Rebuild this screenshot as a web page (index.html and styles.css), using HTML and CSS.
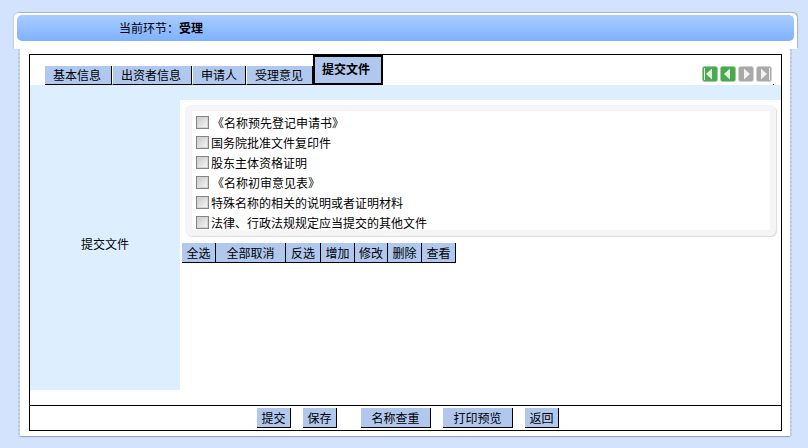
FILE: index.html
```html
<!DOCTYPE html>
<html lang="zh">
<head>
<meta charset="utf-8">
<title>提交文件</title>
<link rel="stylesheet" href="styles.css">
</head>
<body>
<header class="head">
  <div class="head-bar">
    <span class="head-label">当前环节：</span><strong class="head-value">受理</strong>
  </div>
</header>
<main class="sheet">
  <div class="frame">
    <nav class="tabbar">
      <div class="tabs">
        <a class="tab tab-a">基本信息</a>
        <a class="tab tab-b">出资者信息</a>
        <a class="tab tab-c">申请人</a>
        <a class="tab tab-d">受理意见</a>
        <a class="tab-active">提交文件</a>
      </div>
      <div class="pager">
        <svg class="pg" viewBox="0 0 16 16"><rect class="pg-green" x=".5" y=".5" width="15" height="15" rx="2"/><rect class="pg-mark" x="2" y="2" width="1" height="12"/><path class="pg-mark" d="M10 2.5v11L4 8z"/></svg>
        <svg class="pg" viewBox="0 0 16 16"><rect class="pg-green" x=".5" y=".5" width="15" height="15" rx="2"/><path class="pg-mark" d="M10 2.5v11L4 8z"/></svg>
        <svg class="pg" viewBox="0 0 16 16"><rect class="pg-grey" x=".5" y=".5" width="15" height="15" rx="2"/><path class="pg-mark" d="M6 2.5v11L12 8z"/></svg>
        <svg class="pg" viewBox="0 0 16 16"><rect class="pg-grey" x=".5" y=".5" width="15" height="15" rx="2"/><path class="pg-mark" d="M5 2.5v11L11 8z"/><rect class="pg-mark" x="13" y="2" width="1" height="12"/></svg>
      </div>
      <i class="dot"></i>
    </nav>
    <section class="content">
      <div class="side">提交文件</div>
      <div class="pane">
        <div class="group">
          <div class="group-inner">
            <label class="row"><span class="cb"></span><span class="row-gap">《名称预先登记申请书》</span></label>
            <label class="row"><span class="cb"></span>国务院批准文件复印件</label>
            <label class="row"><span class="cb"></span>股东主体资格证明</label>
            <label class="row"><span class="cb"></span><span class="row-gap">《名称初审意见表》</span></label>
            <label class="row"><span class="cb"></span>特殊名称的相关的说明或者证明材料</label>
            <label class="row"><span class="cb"></span>法律、行政法规规定应当提交的其他文件</label>
          </div>
        </div>
        <div class="actions">
          <button class="btn w34">全选</button>
          <button class="btn w70">全部取消</button>
          <button class="btn w35">反选</button>
          <button class="btn w34">增加</button>
          <button class="btn w33">修改</button>
          <button class="btn w34">删除</button>
          <button class="btn w34">查看</button>
        </div>
      </div>
    </section>
    <footer class="foot">
      <button class="btn w34">提交</button>
      <button class="btn w34">保存</button>
      <button class="btn w70 ml12">名称查重</button>
      <button class="btn w70">打印预览</button>
      <button class="btn w34">返回</button>
    </footer>
  </div>
</main>
</body>
</html>
```
FILE: styles.css
```css
* { box-sizing: border-box; }
html, body { margin: 0; padding: 0; }
body {
  width: 808px;
  height: 448px;
  overflow: hidden;
  background: #d3e3fd;
  font: 12px/20px "Noto Sans CJK SC", "Liberation Sans", sans-serif;
  color: #000;
}
.head {
  position: relative;
  z-index: 1;
  width: 783px;
  height: 36px;
  margin: 13px 0 0 14px;
  padding: 2px 3px 0 3px;
  background: #fff;
  border-radius: 5px 5px 0 0;
  box-shadow: 1px -1px 1px #a9b4c6, -1px 0 1px #c3cfe4;
}
.head-bar {
  height: 26px;
  padding-left: 102px;
  line-height: 26px;
  background: linear-gradient(#a8ccff, #80b1ff);
  border-radius: 5px;
}
.head-value { font-weight: 700; }
.sheet {
  position: relative;
  width: 770px;
  height: 387px;
  margin-left: 20px;
  padding: 5px 8px 0 9px;
  background: #fff;
  box-shadow: 0 1px 1px #9aa7bd;
}
.sheet::before,
.sheet::after {
  content: "";
  position: absolute;
  top: 0;
  bottom: -1px;
  width: 2px;
  background: repeating-linear-gradient(#bcc9e1 0 2px, #c8d7f0 2px 4px);
}
.sheet::before { left: -2px; }
.sheet::after { right: -2px; }
.frame {
  width: 753px;
  height: 377px;
  border: 1px solid #000;
}
.tabbar {
  position: relative;
  display: flex;
  justify-content: space-between;
  height: 30px;
  padding: 0 9px 0 15px;
}
.tabs { display: flex; align-items: flex-end; }
.tab {
  height: 19px;
  padding-left: 8px;
  line-height: 17px;
  background: #b0c7ee;
  border-right: 1px solid #000;
  border-bottom: 1px solid #000;
}
.tab-a { width: 67px; }
.tab-b { width: 80px; border-left: 1px solid #fff; }
.tab-c { width: 54px; border-left: 1px solid #fff; }
.tab-d { width: 67px; border-left: 1px solid #fff; }
.tab-active {
  width: 70px;
  height: 30px;
  padding-left: 7px;
  line-height: 24px;
  font-weight: 700;
  background: #b0c7ee;
  border: 2px solid #000;
}
.pager { display: flex; gap: 2px; padding-top: 11px; }
.pg { width: 16px; height: 16px; }
.pg-green { fill: #4aa84e; stroke: #9bd09e; }
.pg-grey { fill: #a9a9a9; stroke: #d2d2d2; }
.pg-mark { fill: #fff; opacity: .85; }
.dot {
  position: absolute;
  right: 7px;
  bottom: 0;
  width: 1px;
  height: 1px;
  background: #000;
}
.content {
  display: flex;
  height: 320px;
  padding-bottom: 15px;
}
.side {
  display: flex;
  align-items: center;
  justify-content: center;
  width: 150px;
  padding-top: 12px;
  background: #ddeeff;
}
.pane { flex: 1; }
.pane::before {
  content: "";
  display: block;
  height: 15px;
  background: #ddeeff;
}
.group {
  width: 591px;
  height: 131px;
  margin: 5px 0 0 5px;
  padding: 5px 5px 5px 6px;
  background: #f5f5f5;
  border: 1px solid #f5f5f5;
  border-radius: 6px;
  box-shadow: 1px 1px 0 #dedede;
}
.group-inner { height: 100%; padding: 2px 0 0 4px; background: #fff; overflow: hidden; }
.row { display: flex; align-items: center; height: 20px; white-space: nowrap; }
.row-gap { margin-left: 1px; }
.cb {
  flex: none;
  width: 13px;
  height: 13px;
  margin: -2px 2px 0 0;
  background: linear-gradient(135deg, #c8c8c8, #f8f8f8);
  border: 1px solid #858585;
  box-shadow: inset 0 0 0 1px #d4d4d4;
}
.actions { display: flex; margin: 7px 0 0 2px; }
.btn {
  display: block;
  height: 20px;
  margin: 0;
  padding: 0;
  font: inherit;
  line-height: 18px;
  color: #000;
  text-align: center;
  background: #b0c7ee;
  border: 0;
  border-right: 1px solid #000;
  border-bottom: 1px solid #000;
}
.w33 { width: 33px; }
.w34 { width: 34px; }
.w35 { width: 35px; }
.w70 { width: 70px; }
.foot {
  display: flex;
  gap: 12px;
  height: 25px;
  padding: 2px 0 0 227px;
  border-top: 1px solid #000;
}
.ml12 { margin-left: 12px; }
```
